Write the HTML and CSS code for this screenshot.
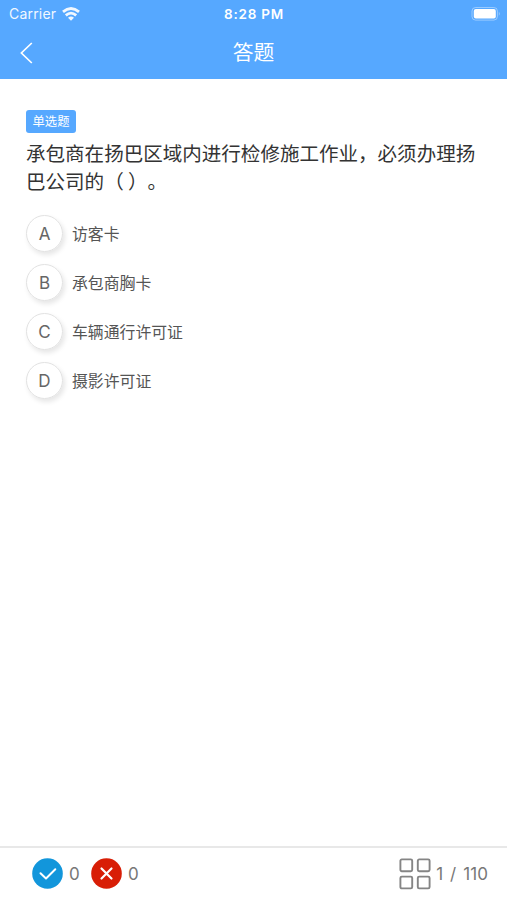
FILE: index.html
```html
<!DOCTYPE html>
<html lang="zh-CN">
<head>
    <meta charset="UTF-8">
    <meta name="viewport" content="width=device-width, initial-scale=1.0">
    <title>答题</title>
    <link rel="stylesheet" href="styles.css">
</head>
<body>
    <header class="header">
        <div class="status-bar">
            <div class="carrier">
                <span>Carrier</span>
                <svg class="wifi" width="18" height="14" viewBox="0 0 18 14" fill="none" stroke="#fff" stroke-width="2.8">
                    <path d="M1 4.8 Q9 -1.8 17 4.8"/>
                    <path d="M3.8 8.4 Q9 3.8 14.2 8.4"/>
                    <path d="M9 13.8 L6 10.7 Q9 8.4 12 10.7 Z" fill="#fff" stroke="none"/>
                </svg>
            </div>
            <div class="time">8:28 PM</div>
            <div class="battery">
                <svg width="30" height="14" viewBox="0 0 30 14">
                    <rect x="1" y="0.5" width="25.4" height="12.6" rx="3.6" fill="none" stroke="#fff" stroke-opacity="0.4"/>
                    <rect x="2.8" y="2.1" width="22" height="9.4" rx="2" fill="#fff"/>
                    <path d="M27.8 4.8 Q29.8 6.8 27.8 8.8 Z" fill="#fff" fill-opacity="0.4"/>
                </svg>
            </div>
        </div>
        <div class="nav-bar">
            <svg class="back" width="14" height="22" viewBox="0 0 14 22" fill="none" stroke="#fff" stroke-width="1.7">
                <path d="M12.8 1 L2.4 11 L12.8 21"/>
            </svg>
            <h1 class="title">答题</h1>
        </div>
    </header>

    <main class="content">
        <span class="tag">单选题</span>
        <p class="question">承包商在扬巴区域内进行检修施工作业，必须办理扬巴公司的（ ）。</p>
        <ul class="options">
            <li class="option"><span class="letter">A</span><span>访客卡</span></li>
            <li class="option"><span class="letter">B</span><span>承包商胸卡</span></li>
            <li class="option"><span class="letter">C</span><span>车辆通行许可证</span></li>
            <li class="option"><span class="letter">D</span><span>摄影许可证</span></li>
        </ul>
    </main>

    <footer class="footer">
        <div class="score">
            <svg width="31" height="31" viewBox="0 0 31 31" fill="none" stroke="#fff" stroke-width="2" stroke-linecap="round" stroke-linejoin="round">
                <circle cx="15.5" cy="15.5" r="15.3" fill="#1296db" stroke="none"/>
                <path d="M8.5 15.3 L14 20.5 L23.3 11.3"/>
            </svg>
            <span class="count">0</span>
        </div>
        <div class="score">
            <svg width="31" height="31" viewBox="0 0 31 31" fill="none" stroke="#fff" stroke-width="2.2" stroke-linecap="round">
                <circle cx="15.5" cy="15.5" r="15.3" fill="#d81e06" stroke="none"/>
                <path d="M10.5 10.5 L20.5 20.5 M20.5 10.5 L10.5 20.5"/>
            </svg>
            <span class="count">0</span>
        </div>
        <div class="progress">
            <svg width="32" height="32" viewBox="0 0 32 32" fill="none" stroke="#858585" stroke-width="1.9">
                <rect x="1.4" y="1.4" width="11.8" height="11.8" rx="1.4"/>
                <rect x="18.8" y="1.4" width="11.8" height="11.8" rx="1.4"/>
                <rect x="1.4" y="18.6" width="11.8" height="11.8" rx="1.4"/>
                <rect x="18.8" y="18.6" width="11.8" height="11.8" rx="1.4"/>
            </svg>
            <span class="page">1 / 110</span>
        </div>
    </footer>
</body>
</html>
```
FILE: styles.css
```css
* {
    box-sizing: border-box;
}

body {
    margin: 0;
    height: 100vh;
    display: flex;
    flex-direction: column;
    background-color: #fff;
    font-family: Inter, "Noto Sans CJK SC", sans-serif;
    color: #333;
    overflow: hidden;
}

.header {
    height: 79px;
    background-color: #56a8ff;
    color: #fff;
}

.status-bar {
    height: 27px;
    padding: 0 6px 0 9px;
    display: grid;
    grid-template-columns: 1fr auto 1fr;
    align-items: center;
    font-size: 14px;
}

.carrier {
    display: flex;
    align-items: center;
    gap: 6px;
    letter-spacing: 0.2px;
    opacity: 0.92;
}

.time {
    font-size: 13.5px;
    font-weight: 600;
    letter-spacing: 0.75px;
    margin-right: 2px;
}

.battery {
    display: flex;
    justify-content: flex-end;
}

.nav-bar {
    height: 52px;
    padding: 0 19px;
    display: grid;
    grid-template-columns: 1fr auto 1fr;
    align-items: center;
}

.title {
    margin: 0;
    font-size: 20.8px;
    font-weight: 400;
    line-height: 30px;
}

.content {
    flex: 1;
    padding: 31px 26px 0;
}

.tag {
    display: block;
    width: 50px;
    height: 23px;
    border-radius: 3px;
    background-color: #56a8ff;
    color: #fff;
    font-size: 12.3px;
    line-height: 23px;
    text-align: center;
}

.question {
    margin: 6px 0 0;
    width: 455px;
    font-family: "Noto Sans CJK SC", sans-serif;
    font-size: 19.55px;
    line-height: 28px;
    /* keep full-width brackets and stops at full width */
    text-spacing-trim: space-all;
}

.options {
    margin: 20px 0 0;
    padding: 0;
    list-style: none;
    display: flex;
    flex-direction: column;
    gap: 12px;
}

.option {
    height: 37px;
    display: flex;
    align-items: center;
    gap: 9px;
    font-size: 15.85px;
    color: #555;
}

.letter {
    width: 37px;
    height: 37px;
    display: flex;
    align-items: center;
    justify-content: center;
    border: 1px solid #e2e2e2;
    border-radius: 50%;
    box-shadow: 2px 3px 5px rgba(0, 0, 0, 0.1);
    font-size: 17px;
    color: #666;
}

.footer {
    height: 54px;
    padding: 0 19px 1px 32px;
    display: flex;
    align-items: center;
    border-top: 2px solid #e8e8e8;
    font-size: 17px;
    color: #777;
}

.score {
    display: flex;
    align-items: center;
    gap: 6px;
    width: 59px;
}

.progress {
    margin-left: auto;
    display: flex;
    align-items: center;
    gap: 5px;
}

.page {
    letter-spacing: 0.1px;
    word-spacing: 2px;
}
```
